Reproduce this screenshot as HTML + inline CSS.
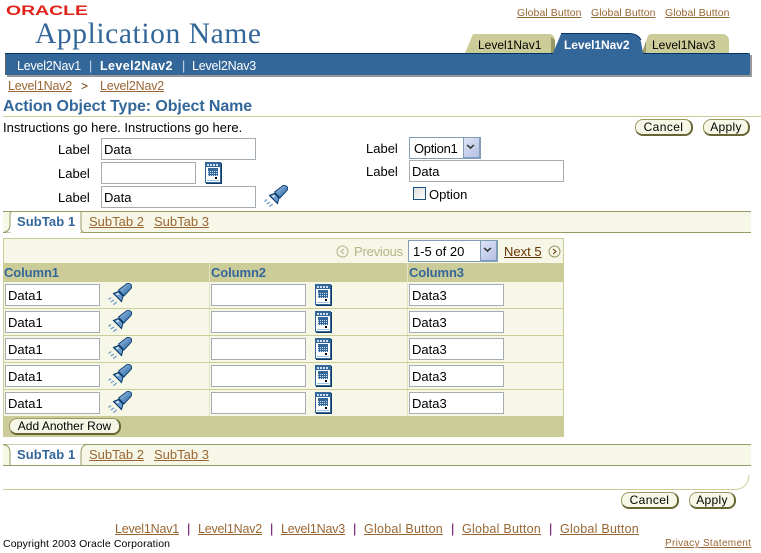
<!DOCTYPE html>
<html><head><meta charset="utf-8"><title>Application Name</title>
<style>
html,body{margin:0;padding:0;background:#fff}
body{position:relative;width:761px;height:553px;overflow:hidden;font-family:"Liberation Sans",Arial,sans-serif;font-size:13px;color:#000}
.t{position:absolute;white-space:nowrap;line-height:16px;height:16px}
.b{position:absolute}
a{color:#996633;text-decoration:underline}
.i{position:absolute;box-sizing:border-box;height:22px;border:1px solid #a5acb2;background:#fff;font-size:13px;line-height:22px;padding-left:2px;white-space:nowrap}
.btn{position:absolute;box-sizing:border-box;height:17px;border:1px solid #999966;border-right:2px solid #666633;border-bottom:2px solid #666633;border-radius:8px;background:#f7f7e7;font-size:12px;line-height:14px;text-align:center;letter-spacing:.4px;white-space:nowrap}
.sel{position:absolute;box-sizing:border-box;height:22px;border:1px solid #7f9db9;background:#fff;font-size:13px;line-height:22px;padding-left:4px;white-space:nowrap}
.ar{position:absolute;top:0;right:0;width:17px;height:20px;background:linear-gradient(135deg,#dfe4f5,#b4c0e4);border-left:1px solid #7f9db9;border-right:1px solid #7f9db9;border-bottom:1px solid #7f9db9;box-sizing:border-box}
.ar:after{content:"";position:absolute;left:3px;top:4px;width:5px;height:5px;border-right:2px solid #333;border-bottom:2px solid #333;transform:scale(.8,.7) rotate(45deg)}
.lb{font-size:13px}
.col{color:#336699;font-weight:bold;font-size:13px;letter-spacing:-.1px}
</style></head><body>
<svg width="0" height="0" style="position:absolute">
<defs><linearGradient id="hg" x1="0" y1="0" x2="1" y2="1"><stop offset="0" stop-color="#a8c6e4"/><stop offset=".55" stop-color="#5a8dc0"/><stop offset="1" stop-color="#1c4c80"/></linearGradient></defs>
<symbol id="fl" viewBox="0 0 24 23">
<path d="M10.500 7 L18.500 .8 Q21 -.3 23 1.500 Q24.500 3 23 5.500 L16 13 Z" fill="url(#hg)" stroke="#003366" stroke-width=".8"/>
<path d="M5.500 10.500 L10.500 8.500 L15 13 L13.500 18.500 Z" fill="#6b9bcc" stroke="#003366" stroke-width="1"/>
<path d="M8 10.800 L10.300 10 L11.500 11.200 L9 12.500 Z" fill="#dbe8f4"/>
<path d="M0.500 16.500 L3 14.500 M2.700 19 L6 17 M5.300 21.700 L8.700 19" stroke="#6699cc" stroke-width="1.200" fill="none"/>
</symbol>
<symbol id="cal" viewBox="0 0 17 22">
<rect x="1" y="1" width="16" height="21" fill="#0f3a66"/>
<rect x="0" y="0" width="16" height="21" fill="#336699"/>
<rect x="2" y="2" width="2" height="2" fill="#cfe0f0"/><rect x="5" y="2" width="2" height="2" fill="#cfe0f0"/><rect x="8" y="2" width="2" height="2" fill="#cfe0f0"/><rect x="11" y="2" width="2" height="2" fill="#cfe0f0"/>
<rect x="1" y="5" width="14" height="15" fill="#fff"/>
<rect x="3" y="6" width="10" height="8" fill="#336699"/>
<path d="M3 9.500H13M3 11.500H13M3 13.500H13" stroke="#cfe0f0" stroke-width="1" stroke-dasharray="1 1"/>
<rect x="10" y="15" width="2" height="2" fill="#000"/>
<rect x="2" y="18" width="12" height="1" fill="#99c2e6"/>
</symbol>
</svg>

<!-- logo -->
<svg class="b" style="left:0;top:0" width="300" height="52">
<text x="6" y="15" font-family="Liberation Sans" font-weight="bold" font-size="13.500" fill="#e2231a" textLength="82" lengthAdjust="spacingAndGlyphs">ORACLE</text>
<text x="35" y="43" font-family="Liberation Serif" font-size="29.500" fill="#336699" textLength="226" lengthAdjust="spacing">Application Name</text>
</svg>
<a class="t" style="left:517px;top:5px;font-size:10.500px;letter-spacing:.07px">Global Button</a>
<a class="t" style="left:591px;top:5px;font-size:10.500px;letter-spacing:.07px">Global Button</a>
<a class="t" style="left:665px;top:5px;font-size:10.500px;letter-spacing:.07px">Global Button</a>

<!-- tabs and bar -->
<svg class="b" style="left:0;top:30px" width="761" height="50">
<path d="M465 23 L473 4 H549 Q554 4 555 10 L555 23 Z" fill="#cccc99"/>
<path d="M551 23 V7 L555 10 V23 Z" fill="#999966"/>
<path d="M642 23 L648 6 Q649 4 652 4 H722 Q728 4 729 10 V23 Z" fill="#cccc99"/>
<path d="M642 23 L646 11 V23 Z" fill="#999966"/>
<path d="M553 23 L561 4 H630 Q639 4 641 12 L643 23 Z" fill="#336699"/>
<path d="M561 3.500 H630 Q638 4 641 10" stroke="#003366" fill="none"/>
<rect x="7" y="25" width="745" height="22" fill="#999"/>
<rect x="5" y="23" width="745" height="22" fill="#336699"/>
<path d="M5 23.500 H553 M643 23.500 H748" stroke="#003366"/>
<rect x="5" y="24" width="1" height="21" fill="#666"/>
</svg>
<span class="t" style="left:478px;top:37px;font-size:12px;letter-spacing:0">Level1Nav1</span>
<span class="t" style="left:564px;top:37px;font-size:12px;font-weight:bold;color:#fff;letter-spacing:-.05px">Level1Nav2</span>
<span class="t" style="left:652px;top:37px;font-size:12px;letter-spacing:0">Level1Nav3</span>
<span class="t" style="left:17px;top:58px;font-size:12.500px;color:#fff;letter-spacing:-.2px">Level2Nav1</span>
<span class="t" style="left:89px;top:58px;font-size:12.500px;color:#cde">|</span>
<span class="t" style="left:100px;top:58px;font-size:12.500px;font-weight:bold;color:#fff;letter-spacing:.4px">Level2Nav2</span>
<span class="t" style="left:182px;top:58px;font-size:12.500px;color:#cde">|</span>
<span class="t" style="left:192px;top:58px;font-size:12.500px;color:#fff;letter-spacing:-.2px">Level2Nav3</span>

<!-- breadcrumb -->
<a class="t" style="left:8px;top:78px;font-size:12.500px;letter-spacing:-.2px">Level1Nav2</a>
<span class="t" style="left:81px;top:78px;font-size:12px;color:#663300">&gt;</span>
<a class="t" style="left:100px;top:78px;font-size:12.500px;letter-spacing:-.2px">Level2Nav2</a>
<span class="t" style="left:3px;top:99px;font-size:16px;font-weight:bold;color:#336699;letter-spacing:-.1px">Action Object Type: Object Name</span>
<div class="b" style="left:3px;top:116px;width:758px;height:1px;background:#cccc99"></div>
<span class="t" style="left:3px;top:120px;font-size:13px">Instructions go here. Instructions go here.</span>
<div class="btn" style="left:635px;top:119px;width:58px">Cancel</div>
<div class="btn" style="left:703px;top:119px;width:47px;letter-spacing:.3px">Apply</div>

<!-- form -->
<span class="t lb" style="left:58px;top:142px">Label</span>
<span class="t lb" style="left:58px;top:166px">Label</span>
<span class="t lb" style="left:58px;top:190px">Label</span>
<div class="i" style="left:101px;top:138px;width:155px">Data</div>
<div class="i" style="left:101px;top:162px;width:95px"></div>
<div class="i" style="left:101px;top:186px;width:155px">Data</div>
<svg class="b" style="left:205px;top:162px" width="17" height="22"><use href="#cal"/></svg>
<svg class="b" style="left:264px;top:185px" width="24" height="23"><use href="#fl"/></svg>
<span class="t lb" style="left:366px;top:141px">Label</span>
<span class="t lb" style="left:366px;top:164px">Label</span>
<div class="sel" style="left:409px;top:137px;width:72px;letter-spacing:-.3px">Option1<span class="ar"></span></div>
<div class="i" style="left:409px;top:160px;width:155px">Data</div>
<div class="b" style="left:413px;top:187px;width:13px;height:13px;box-sizing:border-box;border:1px solid #1c5180;background:linear-gradient(135deg,#dcdcd7,#fff)"></div>
<span class="t" style="left:429px;top:187px">Option</span>

<!-- subtabs 1 -->
<svg class="b" style="left:3px;top:210px" width="748" height="24">
<rect x="0" y="1" width="748" height="22" fill="#f7f7e7"/>
<path d="M0 1.500 H748 M0 22.500 H748" stroke="#999966"/>
<path d="M0 22.500 Q6 22 7 16 V4 Q7 1.500 10 1.500 H78 V18 Q78 22 81 22.500" fill="#fff" stroke="#999966"/>
<path d="M8 22.500 H77" stroke="#fff" stroke-width="1"/>
</svg>
<span class="t" style="left:17px;top:214px;font-weight:bold;color:#336699;font-size:13px;letter-spacing:.1px">SubTab 1</span>
<a class="t" style="left:89px;top:214px;font-size:13px">SubTab 2</a>
<a class="t" style="left:154px;top:214px;font-size:13px">SubTab 3</a>

<!-- table -->
<div class="b" style="left:3px;top:238px;width:561px;height:199px;box-sizing:border-box;border:1px solid #cccc99;background:#f7f7e7"></div>
<svg class="b" style="left:336px;top:245px" width="14" height="14"><circle cx="6.500" cy="6.500" r="5.500" fill="none" stroke="#b5b58a"/><path d="M8 4 L5 6.500 L8 9" fill="none" stroke="#b5b58a"/></svg>
<span class="t" style="left:354px;top:244px;color:#b5b58a;letter-spacing:-.2px">Previous</span>
<div class="sel" style="left:408px;top:240px;width:90px">1-5 of 20<span class="ar"></span></div>
<a class="t" style="left:504px;top:244px;color:#663300">Next 5</a>
<svg class="b" style="left:548px;top:245px" width="14" height="14"><circle cx="6.500" cy="6.500" r="5.500" fill="none" stroke="#999966"/><path d="M5 4 L8 6.500 L5 9" fill="none" stroke="#663300"/></svg>
<div class="b" style="left:3px;top:263px;width:561px;height:19px;background:#cccc99"></div>
<div class="b" style="left:209px;top:263px;width:1px;height:153px;background:#e4e4c4"></div>
<div class="b" style="left:407px;top:263px;width:1px;height:153px;background:#e4e4c4"></div>
<span class="t col" style="left:4px;top:265px">Column1</span>
<span class="t col" style="left:211px;top:265px">Column2</span>
<span class="t col" style="left:409px;top:265px">Column3</span>
<div class="b" style="left:3px;top:308px;width:561px;height:1px;background:#cccc99"></div>
<div class="b" style="left:3px;top:335px;width:561px;height:1px;background:#cccc99"></div>
<div class="b" style="left:3px;top:362px;width:561px;height:1px;background:#cccc99"></div>
<div class="b" style="left:3px;top:389px;width:561px;height:1px;background:#cccc99"></div>

<div class="i" style="left:5px;top:284px;width:95px">Data1</div><svg class="b" style="left:108px;top:283px" width="24" height="23"><use href="#fl"/></svg><div class="i" style="left:211px;top:284px;width:95px"></div><svg class="b" style="left:315px;top:284px" width="17" height="22"><use href="#cal"/></svg><div class="i" style="left:409px;top:284px;width:95px">Data3</div>
<div class="i" style="left:5px;top:311px;width:95px">Data1</div><svg class="b" style="left:108px;top:310px" width="24" height="23"><use href="#fl"/></svg><div class="i" style="left:211px;top:311px;width:95px"></div><svg class="b" style="left:315px;top:311px" width="17" height="22"><use href="#cal"/></svg><div class="i" style="left:409px;top:311px;width:95px">Data3</div>
<div class="i" style="left:5px;top:338px;width:95px">Data1</div><svg class="b" style="left:108px;top:337px" width="24" height="23"><use href="#fl"/></svg><div class="i" style="left:211px;top:338px;width:95px"></div><svg class="b" style="left:315px;top:338px" width="17" height="22"><use href="#cal"/></svg><div class="i" style="left:409px;top:338px;width:95px">Data3</div>
<div class="i" style="left:5px;top:365px;width:95px">Data1</div><svg class="b" style="left:108px;top:364px" width="24" height="23"><use href="#fl"/></svg><div class="i" style="left:211px;top:365px;width:95px"></div><svg class="b" style="left:315px;top:365px" width="17" height="22"><use href="#cal"/></svg><div class="i" style="left:409px;top:365px;width:95px">Data3</div>
<div class="i" style="left:5px;top:392px;width:95px">Data1</div><svg class="b" style="left:108px;top:391px" width="24" height="23"><use href="#fl"/></svg><div class="i" style="left:211px;top:392px;width:95px"></div><svg class="b" style="left:315px;top:392px" width="17" height="22"><use href="#cal"/></svg><div class="i" style="left:409px;top:392px;width:95px">Data3</div>

<div class="b" style="left:3px;top:416px;width:561px;height:21px;background:#cccc99"></div>
<div class="btn" style="left:9px;top:418px;width:112px;letter-spacing:0">Add Another Row</div>

<!-- subtabs 2 -->
<svg class="b" style="left:3px;top:443px" width="748" height="24">
<rect x="0" y="1" width="748" height="22" fill="#f7f7e7"/>
<path d="M0 1.500 H748 M0 22.500 H748" stroke="#999966"/>
<path d="M0 1.500 Q6 2 7 8 V22.500 H78 V8 Q79 2 84 1.500" fill="#fff" stroke="#999966"/>
</svg>
<span class="t" style="left:17px;top:447px;font-weight:bold;color:#336699;font-size:13px;letter-spacing:.1px">SubTab 1</span>
<a class="t" style="left:89px;top:447px;font-size:13px">SubTab 2</a>
<a class="t" style="left:154px;top:447px;font-size:13px">SubTab 3</a>

<svg class="b" style="left:3px;top:470px" width="758" height="22"><path d="M0 19.500 H732 Q745 19 746 5" fill="none" stroke="#cccc99"/></svg>
<div class="btn" style="left:621px;top:492px;width:58px">Cancel</div>
<div class="btn" style="left:689px;top:492px;width:47px;letter-spacing:.3px">Apply</div>

<!-- footer -->
<a class="t" style="left:115px;top:521px;font-size:12.500px;letter-spacing:-.2px">Level1Nav1</a>
<span class="t" style="left:187px;top:521px;color:#660066">|</span>
<a class="t" style="left:198px;top:521px;font-size:12.500px;letter-spacing:-.2px">Level1Nav2</a>
<span class="t" style="left:270px;top:521px;color:#660066">|</span>
<a class="t" style="left:281px;top:521px;font-size:12.500px;letter-spacing:-.2px">Level1Nav3</a>
<span class="t" style="left:353px;top:521px;color:#660066">|</span>
<a class="t" style="left:364px;top:521px;font-size:12.500px;letter-spacing:.25px">Global Button</a>
<span class="t" style="left:451px;top:521px;color:#660066">|</span>
<a class="t" style="left:462px;top:521px;font-size:12.500px;letter-spacing:.25px">Global Button</a>
<span class="t" style="left:549px;top:521px;color:#660066">|</span>
<a class="t" style="left:560px;top:521px;font-size:12.500px;letter-spacing:.25px">Global Button</a>
<span class="t" style="left:3px;top:536px;font-size:10.500px;letter-spacing:.13px">Copyright 2003 Oracle Corporation</span>
<a class="t" style="left:665px;top:536px;font-size:10px;letter-spacing:.3px">Privacy Statement</a>
</body></html>
